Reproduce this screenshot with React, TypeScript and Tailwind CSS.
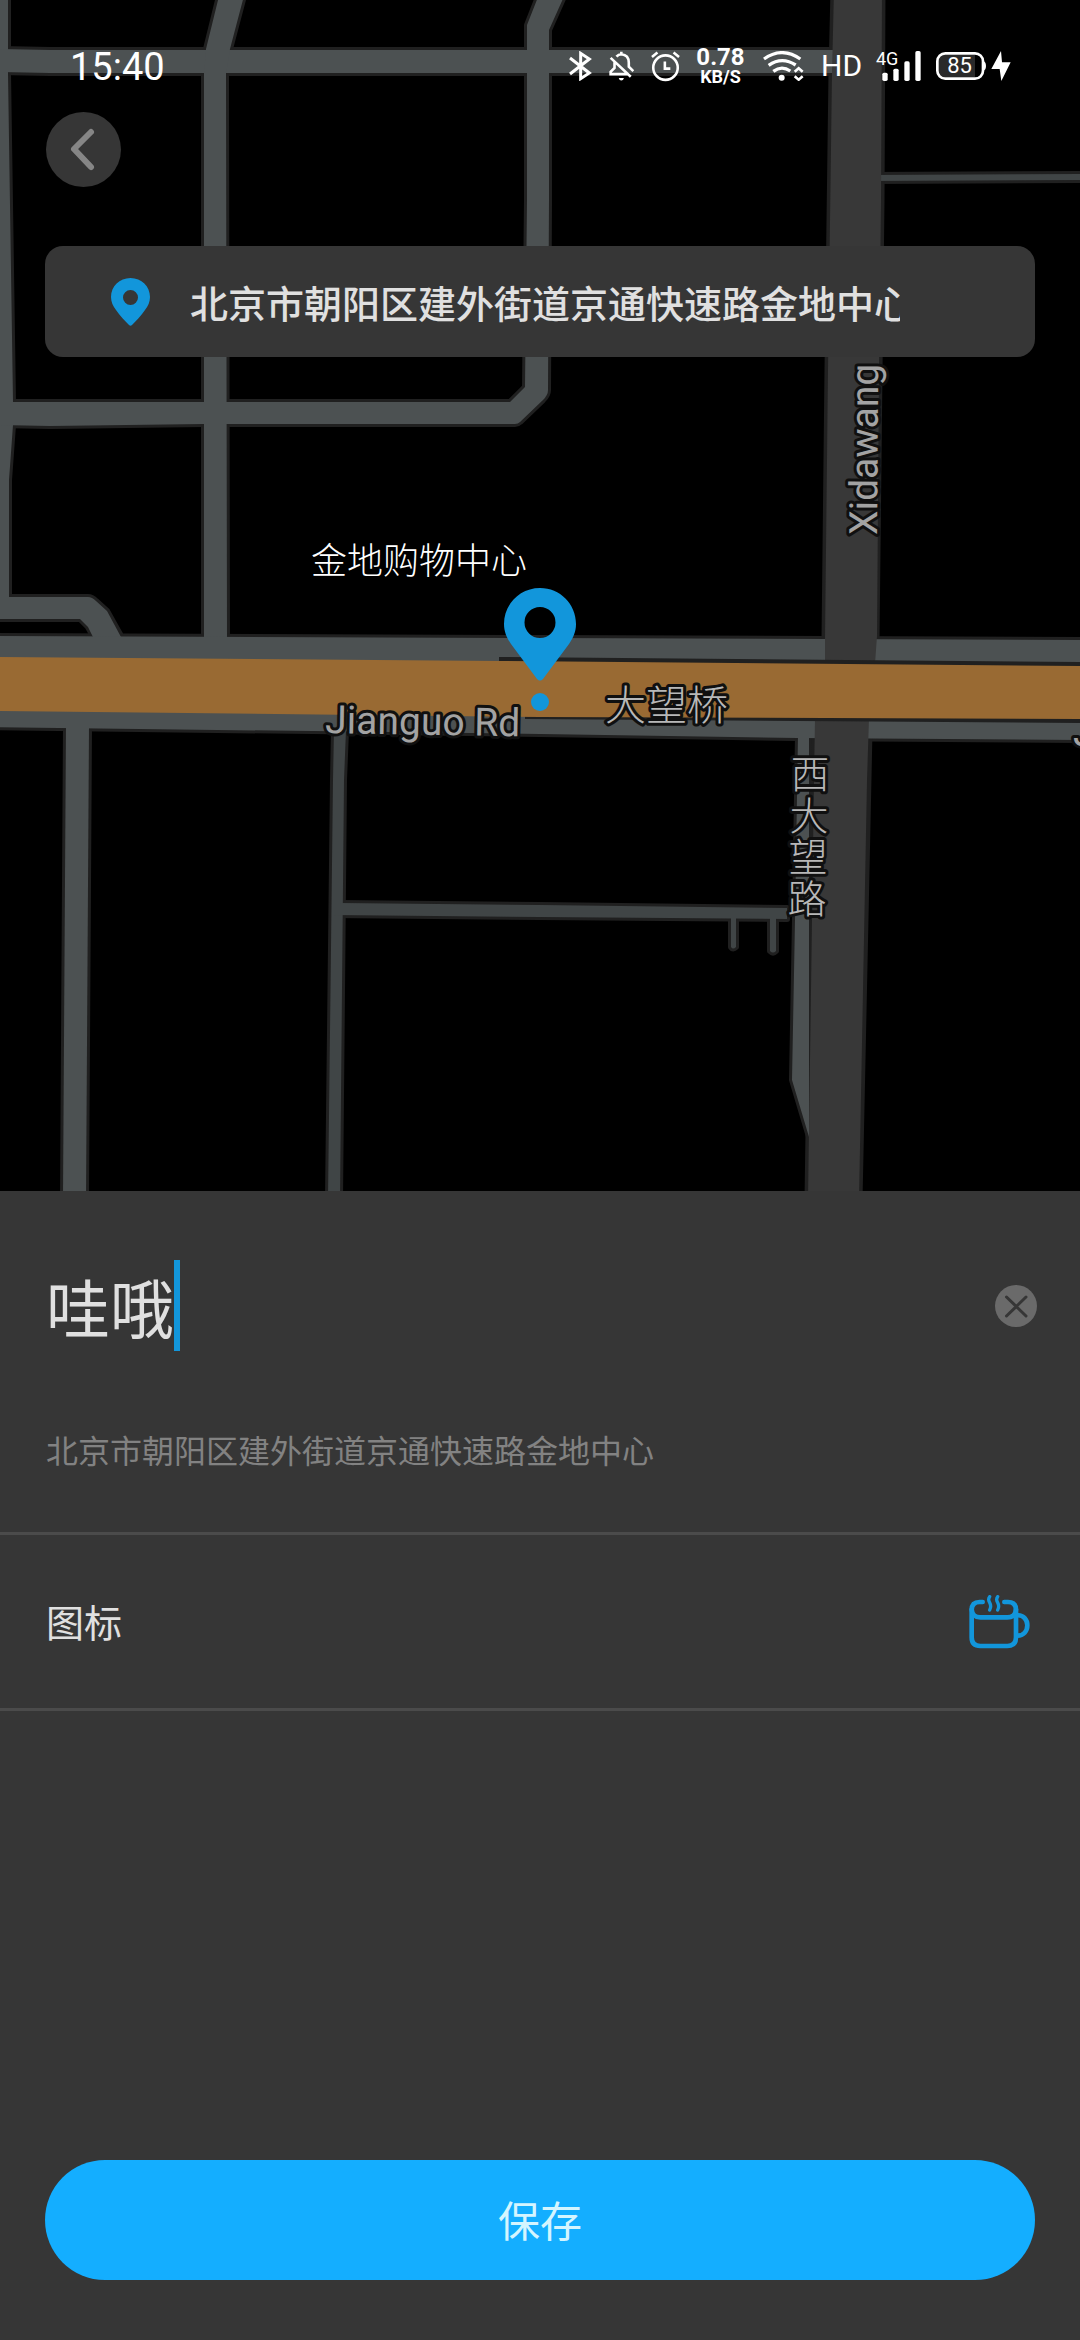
import { useState } from 'react';

const SANS = "font-[Roboto,'Noto_Sans_CJK_SC',sans-serif]";

function StreetMap() {
  return (
    <svg
      className="absolute inset-0 h-full w-full"
      viewBox="0 0 1080 1191"
      preserveAspectRatio="xMidYMin slice"
      aria-label="地图"
    >
      <rect width="1080" height="1191" fill="#000000" />

      {/* road casings */}
      <g stroke="#202020" strokeWidth="6" fill="#202020" strokeLinejoin="round">
        <path d="M-10 -10H8V73L13 402V425L9 480V600H-10Z" />
        <path d="M0 49L50 50H840V73H50L0 72Z" />
        <path d="M220 -8L206 49L204 73V640H227L226 73L230 49L245 -8Z" />
        <path d="M540 -8L527 25V200L525 387L510 402H0V425L50 426L204 424H515Q518 424 520 422L543 400Q548 395 548 390L549 200V30L566 -8Z" />
        <path d="M0 597H88Q92 597 96 601L107 611L121 636H93L88 627L80 619H0Z" />
        <path d="M-10 636L540 638L1090 640V740L798 738L540 734L-10 727Z" />
        <path d="M66 725L63 1200H86L89 725Z" />
        <path d="M334 730L333 780L328 1200H340L344 780L346 730Z" />
        <path d="M340 903L540 905L787 908V919L540 917L332 915V903Z" />
        <path d="M731 915V947Q733 950 736 947V915ZM770 915V951Q773 954 776 951V915Z" />
        <path d="M798 735L795 920L792 1080L809 1137V735Z" />
        <path d="M870 175L1090 174V180L870 181Z" />
      </g>
      <path d="M834 -10L832 73L828 370L825 640L815 730L808 1200H859L869 730L876 640L879 370L881 200L882 -10Z" stroke="#202020" strokeWidth="7" fill="#202020" />

      {/* minor streets */}
      <g fill="#404546">
        <path d="M334 730L333 780L328 1200H340L344 780L346 730Z" />
        <path d="M340 903L540 905L787 908V919L540 917L332 915V903Z" />
        <path d="M731 915V947Q733 950 736 947V915ZM770 915V951Q773 954 776 951V915Z" />
        <path d="M870 175L1090 174V180L870 181Z" />
      </g>

      {/* streets */}
      <g fill="#4c5152">
        <path d="M-10 -10H8V73L13 402V425L9 480V600H-10Z" />
        <path d="M0 49L50 50H840V73H50L0 72Z" />
        <path d="M220 -8L206 49L204 73V640H227L226 73L230 49L245 -8Z" />
        <path d="M540 -8L527 25V200L525 387L510 402H0V425L50 426L204 424H515Q518 424 520 422L543 400Q548 395 548 390L549 200V30L566 -8Z" />
        <path d="M0 597H88Q92 597 96 601L107 611L121 637H93L88 627L80 619H0Z" />
        <path d="M-10 636L540 638L1090 640V740L798 738L540 734L-10 727Z" />
        <path d="M66 725L63 1200H86L89 725Z" />
        <path d="M798 735L795 920L792 1080L809 1137V735Z" />
      </g>

      {/* Xidawang road */}
      <path d="M834 -10L832 73L828 370L825 640V664H875L877 636L879 370L881 200L882 -10Z" fill="#383838" />
      <path d="M815 718L814 780L808 1200H859L867 780L869 718Z" fill="#383838" />

      {/* Jianguo road */}
      <path d="M499 657L1080 662V723L525 719V700H499Z" fill="#202020" />
      <path d="M0 657L500 661L1080 666V719L540 717L0 711Z" fill="#996a33" />

      <g
        fill="#a3a3a3"
        stroke="#101010"
        strokeWidth="6"
        strokeLinejoin="round"
        paintOrder="stroke"
        className={SANS}
        fontSize="39"
      >
        <text transform="translate(325 733) rotate(1)">Jianguo Rd</text>
        <text x="1073" y="746">Jianguo Rd</text>
        <text transform="translate(877 535) rotate(-89.6)">Xidawang</text>
        <text x="605" y="720" fontSize="41" fontWeight="300" fill="#b8b8b8">大望桥</text>
        <g fontWeight="300" textAnchor="middle" fill="#b8b8b8">
          <text x="810" y="788">西</text>
          <text x="809" y="830">大</text>
          <text x="808" y="871">望</text>
          <text x="807" y="913">路</text>
        </g>
      </g>
      <text x="311" y="574" fontSize="36" fontWeight="300" fill="#ffffff" className={SANS}>
        金地购物中心
      </text>

      {/* selected place */}
      <g fill="#1296db">
        <path
          fillRule="evenodd"
          d="M540 588C520 588 504 604 504 624C504 632 507 638 511 644L537 679Q540 682 543 679L569 644C573 638 576 632 576 624C576 604 560 588 540 588ZM540 607A15.500 15.500 0 1 1 540 638A15.500 15.500 0 1 1 540 607Z"
        />
        <circle cx="540" cy="702" r="9" />
      </g>
    </svg>
  );
}

function StatusBar() {
  return (
    <header className="flex h-[90px] items-end justify-between pr-[69px] pl-[70px] text-white">
      <time className="text-[38px] leading-[46px]">15:40</time>
      <div className="flex h-[48px] items-center gap-[17px]">
        <svg className="h-[30px] w-[23px]" viewBox="57 63 69 90" fill="none" stroke="currentColor" strokeWidth="9" role="img" aria-label="蓝牙">
          <path d="M60 84L118 129L92 146V70L118 87L60 132" />
        </svg>
        <svg className="h-[30px] w-[25px]" viewBox="176 63 77 90" fill="none" stroke="currentColor" strokeWidth="8" role="img" aria-label="静音">
          <path d="M199 79Q205 72 214 72Q237 74 237 98V110L251 124M214 64V73M193 96V114L181 126V133H234M181 83L243 141" />
          <path d="M206 145H222Q220 153 214 153Q208 153 206 145Z" fill="currentColor" stroke="none" />
        </svg>
        <svg className="h-[31px] w-[29px]" viewBox="303 64 90 93" fill="none" stroke="currentColor" strokeWidth="8" role="img" aria-label="闹钟">
          <circle cx="348" cy="114" r="38" />
          <path d="M346 95V117H363M306 81L323 67M390 81L373 67" />
        </svg>
        <div className="flex w-[47px] flex-col items-center font-bold">
          <span className="text-[24px] leading-[22px]">0.78</span>
          <span className="text-[18px] leading-[18px]">KB/S</span>
        </div>
        <svg className="ml-[2px] h-[30px] w-[41px]" viewBox="0 0 123 90" fill="none" stroke="currentColor" strokeWidth="10" role="img" aria-label="无线网络">
          <path d="M3 24Q57 -14 112 24M17 43Q57 15 98 42M31 61Q56 42 82 60" />
          <circle cx="56" cy="80" r="9" fill="currentColor" stroke="none" />
          <path d="M95 62L107 52L119 62M95 76L107 86L119 76" strokeWidth="8" />
        </svg>
        <span className="w-[38px] text-[30px] leading-[36px]">HD</span>
        <div className="relative h-[30px] w-[43px]">
          <svg className="h-[30px] w-[45px]" viewBox="248 63 135 90" fill="currentColor" role="img" aria-label="信号">
            <rect x="267" y="128" width="16" height="25" rx="5" />
            <rect x="300" y="116" width="16" height="37" rx="5" />
            <rect x="333" y="94" width="16" height="59" rx="5" />
            <rect x="366" y="63" width="16" height="90" rx="5" />
          </svg>
          <span className="absolute top-0 left-0 text-[18px] leading-[16px]">4G</span>
        </div>
        <div className="flex items-center gap-[5px]">
          <div className="relative flex h-[30px] w-[50px] items-center">
            <svg className="absolute inset-0 h-[30px] w-[50px]" viewBox="438 63 150 90" fill="none" role="img" aria-label="电量">
              <path d="M461 74H555V142H461Q444 142 444 124V92Q444 74 461 74Z" fill="#2a2a2a" />
              <rect x="442" y="70" width="137" height="76" rx="24" stroke="currentColor" strokeWidth="8" />
              <path d="M580 94Q588 96 588 108Q588 120 580 122Z" fill="currentColor" />
            </svg>
            <span className="relative w-[47px] text-center text-[22px] leading-[24px]">85</span>
          </div>
          <svg className="h-[30px] w-[20px]" viewBox="603 63 60 90" fill="currentColor" role="img" aria-label="充电中">
            <path d="M633 63L604 117H629L634 153L662 97H636Z" />
          </svg>
        </div>
      </div>
    </header>
  );
}

function BackButton() {
  return (
    <button type="button" aria-label="返回" className="mt-[22px] ml-[46px] flex size-[75px] items-center justify-center rounded-full bg-[#363636]">
      <svg className="size-[75px]" viewBox="0 0 75 75" fill="none" stroke="#868686" strokeWidth="6" strokeLinecap="round" strokeLinejoin="round">
        <path d="M45 20L28 37L45 55" />
      </svg>
    </button>
  );
}

function AddressCard({ address }: { address: string }) {
  return (
    <div className="mx-[45px] mt-[59px] flex h-[111px] items-center rounded-[18px] bg-[#363636] pr-[135px] pl-[66px]">
      <svg className="h-[48px] w-[39px] shrink-0" viewBox="0 0 39 48" fill="#1296db">
        <path
          fillRule="evenodd"
          d="M19.500 0C8.500 0 0 8.500 0 19C0 24 2 28 5 32C9 38 14 43 18 47Q19.500 48.500 21 47C25 43 30 38 34 32C37 28 39 24 39 19C39 8.500 30.500 0 19.500 0ZM19.500 12A7.500 7.500 0 1 1 19.500 27A7.500 7.500 0 1 1 19.500 12Z"
        />
      </svg>
      <p className="ml-[40px] min-w-0 flex-1 overflow-hidden pt-[6px] text-[38px] leading-[56px] font-medium whitespace-nowrap text-[#e0e0e0]">
        {address}
      </p>
    </div>
  );
}

function CupIcon() {
  return (
    <svg className="h-[54px] w-[61px]" viewBox="86 1067 183 162" fill="none" stroke="#1296db" strokeWidth="14" strokeLinecap="round">
      <path d="M127 1088H118Q94 1088 94 1112V1194Q94 1220 120 1220H201Q227 1220 227 1194V1112Q227 1088 203 1088H192" />
      <path d="M94 1110Q96 1134 120 1134H201Q225 1134 227 1110" />
      <path d="M230 1128C250 1126 261 1142 261 1158C261 1175 250 1190 230 1189" />
      <path d="M148 1072Q142 1080 148 1090Q154 1101 148 1112M172 1072Q166 1080 172 1090Q178 1101 172 1112" strokeWidth="10" />
    </svg>
  );
}

export default function App() {
  const address = '北京市朝阳区建外街道京通快速路金地中心';
  const [name, setName] = useState('哇哦');

  return (
    <main className="flex min-h-screen flex-col bg-[#363636] font-[Roboto,'Noto_Sans_CJK_SC',sans-serif]">
      <section className="relative aspect-[1080/1191] w-full shrink-0 overflow-hidden">
        <StreetMap />
        <div className="relative">
          <StatusBar />
          <BackButton />
          <AddressCard address={address} />
        </div>
      </section>

      <form className="flex flex-1 flex-col" onSubmit={(e) => e.preventDefault()}>
        <div className="border-b-[3px] border-[#4b4b4b] px-[46px] pt-[69px] pb-[56px]">
          <div className="flex items-center justify-between">
            <div className="flex min-w-0 items-center">
              <input
                aria-label="名称"
                value={name}
                onChange={(e) => setName(e.target.value)}
                className="h-[91px] max-w-full min-w-0 [field-sizing:content] bg-transparent pb-[2px] text-[64px] leading-[87px] text-[#e0e0e0] caret-transparent outline-none"
              />
              <span className="h-[91px] w-[6px] shrink-0 bg-[#1296db]" />
            </div>
            <button type="button" aria-label="清除" onClick={() => setName('')} className="-mr-[3px] size-[42px] shrink-0">
              <svg viewBox="0 0 42 42" className="size-[42px]">
                <circle cx="21" cy="21" r="21" fill="#6a6a6a" />
                <path d="M11.500 12L31 31M31 12L11.500 31" stroke="#363636" strokeWidth="3" strokeLinecap="round" />
              </svg>
            </button>
          </div>
          <p className="mt-[77px] text-[32px] leading-[48px] text-[#828282]">{address}</p>
        </div>

        <button type="button" className="flex h-[176px] items-center justify-between border-b-[3px] border-[#4b4b4b] pr-[50px] pl-[46px]">
          <span className="pt-[4px] text-[38px] leading-[56px] text-[#e0e0e0]">图标</span>
          <CupIcon />
        </button>

        <div className="mt-auto px-[45px] pt-[60px] pb-[60px]">
          <button type="submit" className="h-[120px] w-full rounded-full bg-[#14aeff] pt-[6px] text-[42px] leading-[60px] text-[#d4f5ff]">
            保存
          </button>
        </div>
      </form>
    </main>
  );
}
